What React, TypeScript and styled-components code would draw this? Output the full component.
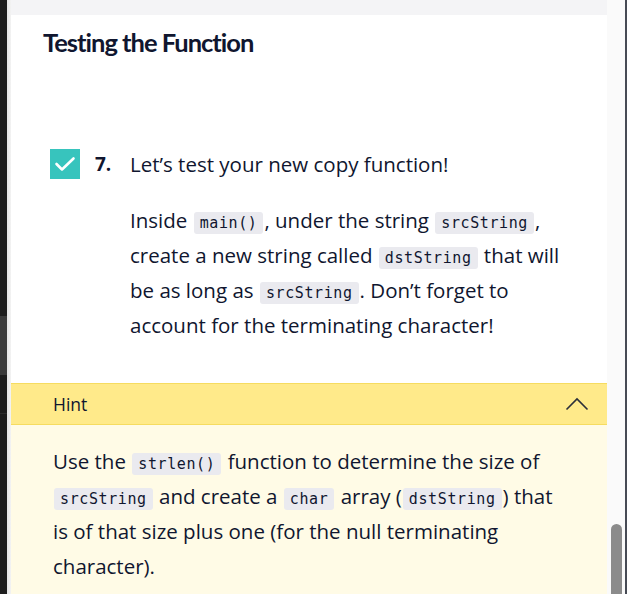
import React from "react";
import styled, { createGlobalStyle } from "styled-components";

const Global = createGlobalStyle`
  html, body { margin: 0; padding: 0; height: 100%; overflow: hidden; }
  body { font-family: "Open Sans", "Noto Sans", sans-serif; color: #10162f; }
`;

const Shell = styled.div`
  display: grid;
  grid-template-columns: 7px 4px 596px 18px 2px;
  height: 594px;
  overflow: hidden;
`;

const LeftRail = styled.div`
  display: flex;
  flex-direction: column;
  background: #1e1e1e;
`;

const RailBlock = styled.div<{ $h: number; $bg: string }>`
  height: ${(p) => p.$h}px;
  flex: none;
  background: ${(p) => p.$bg};
`;

const Edge = styled.div`
  background: linear-gradient(to right, #e6e6e6, #f3f3f3);
`;

const Main = styled.main`
  display: flex;
  flex-direction: column;
  background: #ffffff;
  min-width: 0;
`;

const TopBand = styled.div`
  height: 15px;
  flex: none;
  background: #f4f4f6;
`;

const Heading = styled.h2`
  margin: 11px 0 0 32px;
  font-family: "Lato", "Open Sans", sans-serif;
  font-size: 25.5px;
  letter-spacing: -1px;
  line-height: 32px;
  font-weight: 700;
  color: #10162f;
`;

const Step = styled.div`
  display: flex;
  align-items: flex-start;
  margin: 91px 0 0 39px;
`;

const CheckBox = styled.div`
  width: 30px;
  height: 30px;
  flex: none;
  background: #37c4bd;
  display: flex;
  align-items: center;
  justify-content: center;
`;

const StepNumber = styled.div`
  width: 35px;
  flex: none;
  margin-left: 15px;
  font-size: 19px;
  font-weight: 700;
  line-height: 30px;
`;

const StepBody = styled.div`
  flex: 1;
  min-width: 0;
  padding-right: 40px;
`;

const StepTitle = styled.p`
  margin: 0;
  font-size: 20.5px;
  line-height: 30px;
`;

const Para = styled.p`
  margin: 24px 0 0;
  font-size: 20.5px;
  line-height: 35px;
`;

const Code = styled.code`
  font-family: "DejaVu Sans Mono", "Liberation Mono", monospace;
  font-size: 15px;
  letter-spacing: 0.6px;
  line-height: 1;
  background: #eaeaef;
  border-radius: 3px;
  padding: 2px 6px;
  margin: 0 1px;
  color: #10162f;
`;

const Hint = styled.section`
  margin-top: 40px;
  display: flex;
  flex-direction: column;
  flex: 1;
`;

const HintHeader = styled.div`
  height: 40px;
  flex: none;
  display: flex;
  align-items: center;
  justify-content: space-between;
  padding: 0 18px 0 42px;
  background: #ffea8a;
  border-top: 1px solid #f6dc60;
  border-bottom: 1px solid #f6dc60;
`;

const HintLabel = styled.span`
  font-size: 17.5px;
  color: #10162f;
`;

const HintBody = styled.div`
  flex: 1;
  background: #fffbe6;
  padding: 19px 50px 0 42px;
`;

const HintText = styled.p`
  margin: 0;
  font-size: 20.5px;
  line-height: 35px;
`;

const Gutter = styled.div`
  background: #fafafa;
  display: flex;
  flex-direction: column;
  align-items: center;
`;

const Thumb = styled.div`
  margin-top: auto;
  width: 11px;
  height: 80px;
  margin-bottom: -10px;
  border-radius: 6px;
  background: #8b8b8b;
`;

const RightLine = styled.div`
  background: #474b55;
`;

export default function App() {
  return (
    <>
      <Global />
      <Shell>
        <LeftRail>
          <RailBlock $h={316} $bg="#1e1e1e" />
          <RailBlock $h={59} $bg="#3b3b3b" />
          <RailBlock $h={38} $bg="#1e1e1e" />
          <RailBlock $h={1} $bg="#2e2e2e" />
        </LeftRail>
        <Edge />
        <Main>
          <TopBand />
          <Heading>Testing the Function</Heading>
          <Step>
            <CheckBox>
              <svg width="30" height="30" viewBox="0 0 30 30">
                <polyline
                  points="6.5,15 12,20.5 23.5,9.5"
                  fill="none"
                  stroke="#ffffff"
                  strokeWidth="2.6"
                  strokeLinecap="round"
                  strokeLinejoin="round"
                />
              </svg>
            </CheckBox>
            <StepNumber>7.</StepNumber>
            <StepBody>
              <StepTitle>Let’s test your new copy function!</StepTitle>
              <Para>
                Inside <Code>main()</Code>, under the string <Code>srcString</Code>,
                create a new string called <Code>dstString</Code> that will be as
                long as <Code>srcString</Code>. Don’t forget to account for the
                terminating character!
              </Para>
            </StepBody>
          </Step>
          <Hint>
            <HintHeader>
              <HintLabel>Hint</HintLabel>
              <svg width="24" height="14" viewBox="0 0 24 14">
                <polyline
                  points="1.5,12.5 12,2 22.5,12.5"
                  fill="none"
                  stroke="#2b2f3a"
                  strokeWidth="1.6"
                />
              </svg>
            </HintHeader>
            <HintBody>
              <HintText>
                Use the <Code>strlen()</Code> function to determine the size of{" "}
                <Code>srcString</Code> and create a <Code>char</Code> array (
                <Code>dstString</Code>) that is of that size plus one (for the null
                terminating character).
              </HintText>
            </HintBody>
          </Hint>
        </Main>
        <Gutter>
          <Thumb />
        </Gutter>
        <RightLine />
      </Shell>
    </>
  );
}
